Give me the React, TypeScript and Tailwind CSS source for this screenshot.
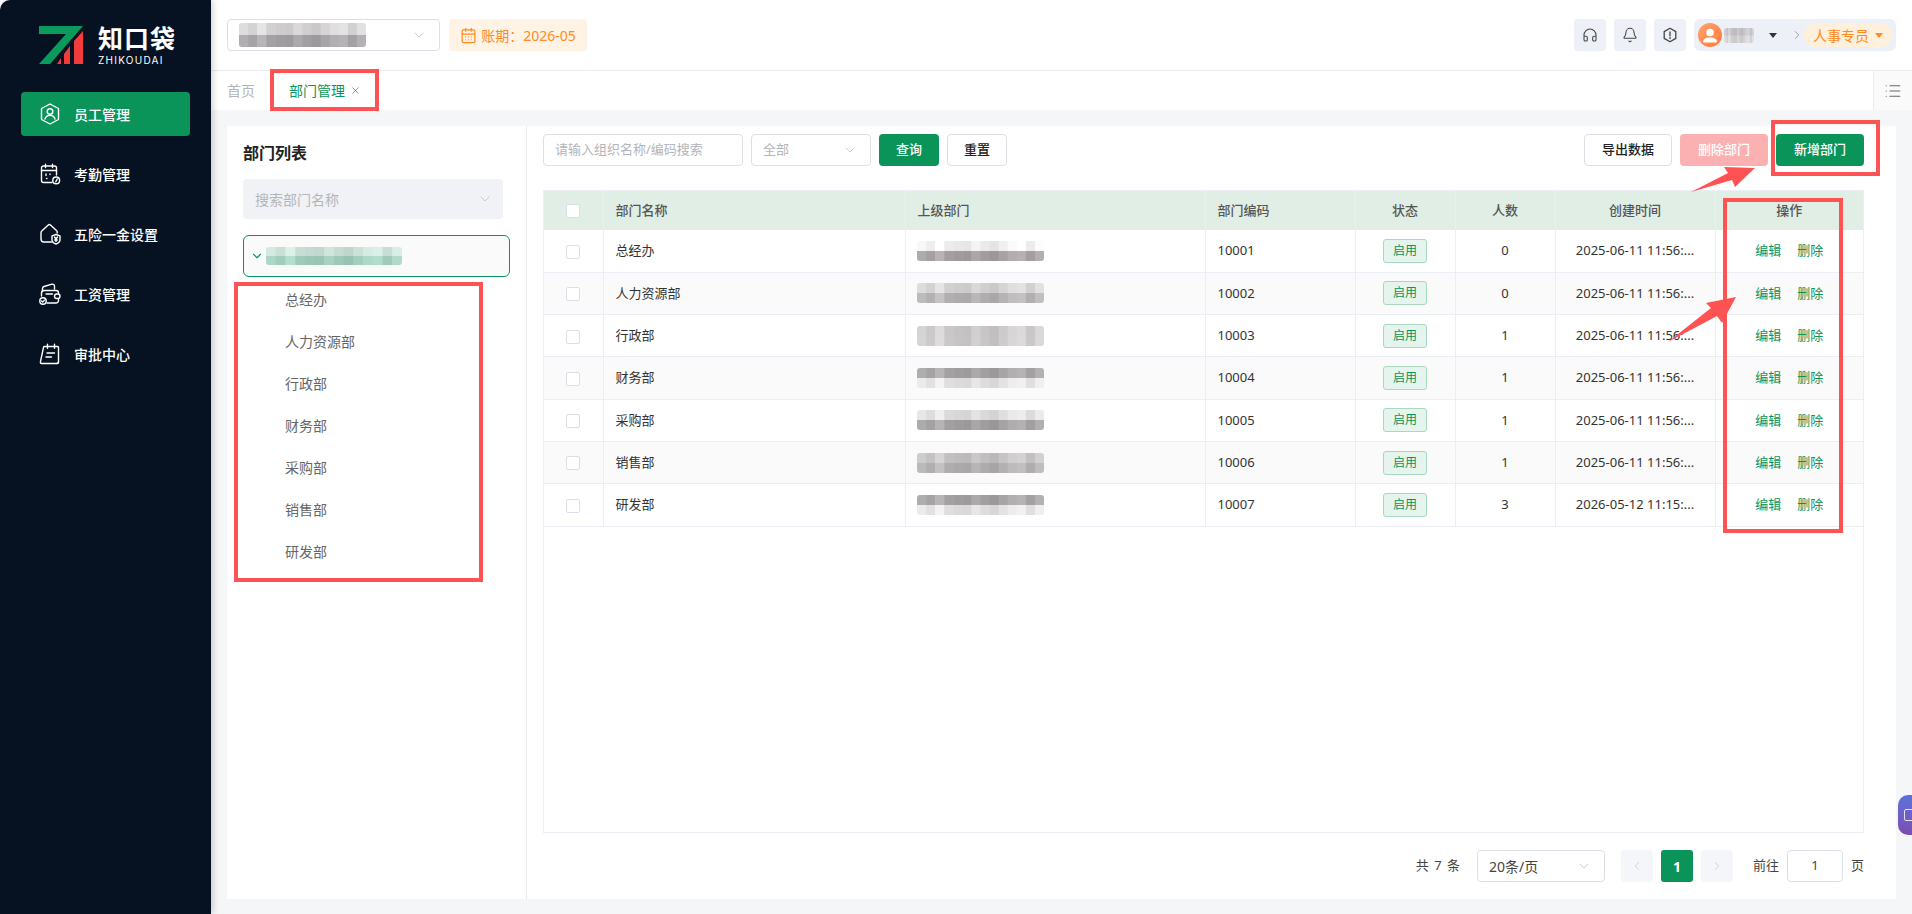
import { ChevronDown, ChevronLeft, ChevronRight, X, Headphones, Bell, List, CalendarDays } from "lucide-react";

const menuItems = [
  { label: "员工管理", icon: "staff", active: true },
  { label: "考勤管理", icon: "attendance" },
  { label: "五险一金设置", icon: "insurance" },
  { label: "工资管理", icon: "salary" },
  { label: "审批中心", icon: "approval" },
];

const rows = [
  { name: "总经办", code: "10001", count: 0, time: "2025-06-11 11:56:...", blur: ["f3f2f2", "aaa5a5"] },
  { name: "人力资源部", code: "10002", count: 0, time: "2025-06-11 11:56:...", blur: ["d8d7d8", "b8b5b6"] },
  { name: "行政部", code: "10003", count: 1, time: "2025-06-11 11:56:...", blur: ["cfcdce", "d0cecf"] },
  { name: "财务部", code: "10004", count: 1, time: "2025-06-11 11:56:...", blur: ["aaa7a8", "e6e5e6"] },
  { name: "采购部", code: "10005", count: 1, time: "2025-06-11 11:56:...", blur: ["e2e1e1", "a8a5a6"] },
  { name: "销售部", code: "10006", count: 1, time: "2025-06-11 11:56:...", blur: ["c8c6c7", "b5b3b4"] },
  { name: "研发部", code: "10007", count: 3, time: "2026-05-12 11:15:...", blur: ["aaa7a8", "e6e5e6"] },
];

const treeItems = ["总经办", "人力资源部", "行政部", "财务部", "采购部", "销售部", "研发部"];

// lightness wobble so the blurred names look like a mosaic
const wobble = [6, -4, 14, -6, -10, -12, 2, -8, -14, -2, 8, 12, -6, 10];

function shade(hex: string, delta: number) {
  const channel = (i: number) => {
    const v = parseInt(hex.slice(i, i + 2), 16) + delta;
    return Math.max(0, Math.min(255, v));
  };
  return `rgb(${channel(0)},${channel(2)},${channel(4)})`;
}

function Mosaic({ colors, width, height }: { colors: string[]; width: number; height: number }) {
  const cols = wobble.length;
  const cw = width / cols;
  const ch = height / colors.length;
  return (
    <svg width={width} height={height} className="block rounded-[3px]">
      {colors.map((c, r) =>
        wobble.map((d, i) => (
          <rect key={`${r}-${i}`} x={i * cw} y={r * ch} width={cw + 0.5} height={ch + 0.5} fill={shade(c, d)} />
        ))
      )}
    </svg>
  );
}

function MenuIcon({ name }: { name: string }) {
  const common = {
    width: 24,
    height: 24,
    viewBox: "0 0 24 24",
    fill: "none",
    stroke: "currentColor",
    strokeWidth: 1.4,
    strokeLinecap: "round" as const,
    strokeLinejoin: "round" as const,
  };
  if (name === "staff")
    return (
      <svg {...common}>
        <path d="M12 2 20.5 6.5V17.5L12 22 3.5 17.5V6.5Z" />
        <circle cx="12" cy="9.5" r="2.8" />
        <path d="M7 17c.8-2.6 2.8-3.6 5-3.6s4.2 1 5 3.6" />
      </svg>
    );
  if (name === "attendance")
    return (
      <svg {...common}>
        <path d="M14 20.5H5.5a2 2 0 0 1-2-2V6a2 2 0 0 1 2-2h11a2 2 0 0 1 2 2v7" />
        <path d="M3.5 8.5h15M7.5 2.2v3.4M14.5 2.2v3.4M8 12v1.5M12 12v.6M8.5 16.5h.5" />
        <circle cx="18.2" cy="18.4" r="3.4" />
        <path d="m19.2 17-1.4 2.8" />
      </svg>
    );
  if (name === "insurance")
    return (
      <svg {...common}>
        <path d="M13.5 20H6a3 3 0 0 1-3-3V10.5a2 2 0 0 1 .7-1.5L10 3.2a2 2 0 0 1 2.7 0L18.500 8.500a2 2 0 0 1 .7 1.500v1" />
        <path d="M18 12.500l4 1.300v4c0 2.200-1.800 3.500-4 4.200-2.200-.7-4-2-4-4.200v-4Z" />
        <path d="m16.500 15 1.500 2 1.500-2M18 17v2.500M16.700 18h2.600" />
      </svg>
    );
  if (name === "salary")
    return (
      <svg {...common}>
        <path d="M4.500 9.500V6.500c0-.9.6-1.700 1.500-2l8-2.300c1.200-.3 2.500.6 2.500 1.900V7" />
        <path d="M3.500 14V11a2.500 2.500 0 0 1 2.500-2.500h12a2.500 2.500 0 0 1 2.500 2.500v1" />
        <path d="M20.500 17v1.500a2.500 2.500 0 0 1-2.500 2.500H9" />
        <path d="M8 12h6.500" />
        <rect x="16.500" y="12" width="5.500" height="4.500" rx="2.200" />
        <circle cx="5" cy="19" r="3.200" />
        <path d="m3.600 19 1.100 1.100 1.800-2" />
      </svg>
    );
  return (
    <svg {...common}>
      <path d="M6.500 4.500h13a1 1 0 0 1 1 1V20a1.500 1.500 0 0 1-1.500 1.500H3.500a1.200 1.200 0 0 1-1.100-1.500L5.500 5.300a1 1 0 0 1 1-.8Z" />
      <path d="M9.500 2.200v4M16.500 2.200v4M9 11h7.500M8 15h5.500M20.500 20c0 1-.8 1.500-1.500 1.500" />
    </svg>
  );
}

function Logo() {
  return (
    <div className="flex items-start gap-[15px]">
      <svg width="44" height="38" viewBox="0 0 44 38" className="mt-px shrink-0">
        <path d="M0 0H44L11 38H0L27 8H0Z" fill="#0a9a5c" />
        <path d="M18 38 22 32V38Z M25 38V28L31 20V38Z M35 38V15L44 5V38Z" fill="#f23c3c" />
      </svg>
      <div className="flex flex-col text-white">
        <span className="text-[25px] leading-[26px] font-bold tracking-[1px]">知口袋</span>
        <span className="mt-[3px] font-['Inter',sans-serif] text-[10px] leading-[12px] tracking-[1.25px]">ZHIKOUDAI</span>
      </div>
    </div>
  );
}

function Sidebar() {
  return (
    <aside className="relative z-10 flex h-full w-[211px] shrink-0 flex-col rounded-tl-[10px] bg-[#061221] shadow-[2px_0_6px_rgba(0,0,0,0.18)]">
      <div className="flex h-[92px] pt-[25px] pl-[39px]">
        <Logo />
      </div>
      <nav className="flex flex-col px-[21px]">
        {menuItems.map((item) => (
          <div
            key={item.label}
            className={
              item.active
                ? "mb-4 flex h-[44px] items-center gap-[12px] rounded-[4px] bg-[#0a945a] pl-[17px] text-white"
                : "mb-4 flex h-[44px] items-center gap-[12px] pl-[17px] text-white"
            }
          >
            <MenuIcon name={item.icon} />
            <span className="text-[14px] font-medium">{item.label}</span>
          </div>
        ))}
      </nav>
    </aside>
  );
}

function TopBar() {
  return (
    <header className="flex h-[71px] shrink-0 items-center border-b border-[#e9ebef] bg-white pr-[16px] pl-[16px]">
      <div className="flex h-[32px] w-[213px] items-center justify-between rounded-[4px] border border-[#dcdfe6] pr-[12px] pl-[11px]">
        <Mosaic colors={["d8d6d7", "a9a7a9"]} width={127} height={24} />
        <ChevronDown size={16} strokeWidth={1} className="text-[#b5b8bf]" />
      </div>
      <div className="ml-[9px] flex h-[32px] w-[138px] items-center justify-center gap-[4px] rounded-[4px] bg-[#fff3e6] text-[14px] text-[#ff8a1f]">
        <CalendarDays size={17} strokeWidth={1.7} />
        <span>账期：2026-05</span>
      </div>
      <div className="ml-auto flex items-center gap-[8px]">
        <div className="flex h-[32px] w-[32px] items-center justify-center rounded-[4px] bg-[#edf0f7] text-[#444]">
          <Headphones size={16} strokeWidth={1.6} />
        </div>
        <div className="flex h-[32px] w-[32px] items-center justify-center rounded-[4px] bg-[#edf0f7] text-[#444]">
          <Bell size={16} strokeWidth={1.6} />
        </div>
        <div className="flex h-[32px] w-[32px] items-center justify-center rounded-[4px] bg-[#edf0f7] text-[#444]">
          <svg width="16" height="16" viewBox="0 0 16 16" fill="none" stroke="currentColor" strokeWidth="1.3">
            <path d="M8 1.300 13.800 4.600V11.400L8 14.700 2.200 11.400V4.600Z" strokeLinejoin="round" />
            <path d="M8 4.800v4M8 10.500v1" strokeLinecap="round" />
          </svg>
        </div>
        <div className="flex h-[32px] w-[202px] items-center rounded-[6px] bg-[#edf0f7] pr-[4px] pl-[4px]">
          <div className="flex h-[24px] w-[24px] items-center justify-center overflow-hidden rounded-full bg-gradient-to-br from-[#ffa36b] to-[#ff7a3d]">
            <svg width="24" height="24" viewBox="0 0 24 24" fill="#fff">
              <circle cx="12" cy="9.500" r="3.800" />
              <path d="M5 18.500c.5-3 3.500-4 7-4s6.500 1 7 4c0 .6-.4 1-1 1H6c-.6 0-1-.4-1-1Z" />
            </svg>
          </div>
          <div className="ml-[2px]">
            <Mosaic colors={["c8c7cb", "d6d5d8"]} width={30} height={15} />
          </div>
          <div className="ml-[15px] h-0 w-0 border-x-[4px] border-t-[5px] border-x-transparent border-t-[#333]" />
          <ChevronRight size={14} strokeWidth={1} className="ml-[13px] text-[#666]" />
          <div className="ml-auto flex h-[24px] w-[88px] items-center justify-center gap-[6px] rounded-full bg-[#fff0dc] text-[14px] text-[#ff8a1f]">
            <span>人事专员</span>
            <div className="h-0 w-0 border-x-[4px] border-t-[5px] border-x-transparent border-t-[#ff8a1f]" />
          </div>
        </div>
      </div>
    </header>
  );
}

function TabBar() {
  return (
    <div className="flex h-[39px] shrink-0 items-center bg-white pl-[16px] text-[14px]">
      <span className="text-[#b3b5ba]">首页</span>
      <div className="ml-[34px] flex items-center gap-[5px] text-[#0a945a]">
        <span>部门管理</span>
        <X size={11} strokeWidth={1.5} />
      </div>
      <div className="ml-auto flex h-full w-[39px] items-center justify-center border-l border-[#e9ebef] bg-[#fafafa] text-[#666]">
        <List size={18} strokeWidth={1.6} />
      </div>
    </div>
  );
}

function DeptPanel() {
  return (
    <div className="flex w-[300px] shrink-0 flex-col border-r border-[#e9ebef] pt-[16px] pl-[16px]">
      <div className="text-[16px] leading-[22px] font-bold text-[#222]">部门列表</div>
      <div className="mt-[15px] flex h-[40px] w-[260px] items-center justify-between rounded-[4px] bg-[#f0f2f5] pr-[10px] pl-[12px] text-[14px] text-[#b3b5ba]">
        <span>搜索部门名称</span>
        <ChevronDown size={16} strokeWidth={1} />
      </div>
      <div className="mt-[16px] flex h-[42px] w-[267px] items-center rounded-[6px] border border-[#0a945a] bg-[#fafafa] pl-[6px]">
        <ChevronDown size={14} strokeWidth={2} className="text-[#0a945a]" />
        <div className="ml-[2px]">
          <Mosaic colors={["cfe3db", "a6d1c1"]} width={136} height={18} />
        </div>
      </div>
      <ul className="mt-[1px] flex flex-col pl-[42px] text-[14px] text-[#666]">
        {treeItems.map((t) => (
          <li key={t} className="flex h-[42px] items-center">
            {t}
          </li>
        ))}
      </ul>
    </div>
  );
}

function Checkbox() {
  return <span className="inline-block h-[14px] w-[14px] rounded-[2px] border border-[#dcdfe6] bg-white align-middle" />;
}

function DeptTable() {
  const cell = "border-r border-b border-[#ebeef5]";
  return (
    <div className="mt-[24px] min-h-0 flex-1 border border-[#ebeef5]">
      <table className="w-full table-fixed border-collapse text-[13px] text-[#333]">
        <colgroup>
          <col className="w-[59px]" />
          <col className="w-[302px]" />
          <col className="w-[300px]" />
          <col className="w-[150px]" />
          <col className="w-[100px]" />
          <col className="w-[100px]" />
          <col className="w-[160px]" />
          <col />
        </colgroup>
        <thead>
          <tr className="h-[39px] bg-[#e0eee5] text-[#555]">
            <th className={`${cell} border-b-0 border-[#d5e3da] text-center font-normal`}>
              <Checkbox />
            </th>
            <th className={`${cell} border-b-0 border-[#d5e3da] pl-[12px] text-left font-medium`}>部门名称</th>
            <th className={`${cell} border-b-0 border-[#d5e3da] pl-[12px] text-left font-medium`}>上级部门</th>
            <th className={`${cell} border-b-0 border-[#d5e3da] pl-[12px] text-left font-medium`}>部门编码</th>
            <th className={`${cell} border-b-0 border-[#d5e3da] text-center font-medium`}>状态</th>
            <th className={`${cell} border-b-0 border-[#d5e3da] text-center font-medium`}>人数</th>
            <th className={`${cell} border-b-0 border-[#d5e3da] text-center font-medium`}>创建时间</th>
            <th className="text-center font-medium">操作</th>
          </tr>
        </thead>
        <tbody>
          {rows.map((row, i) => (
            <tr key={row.code} className={i % 2 === 1 ? "h-[42.3px] bg-[#fafafa]" : "h-[42.3px] bg-white"}>
              <td className={`${cell} text-center`}>
                <Checkbox />
              </td>
              <td className={`${cell} pl-[12px]`}>{row.name}</td>
              <td className={`${cell} pl-[11px]`}>
                <Mosaic colors={row.blur} width={127} height={20} />
              </td>
              <td className={`${cell} pl-[12px]`}>{row.code}</td>
              <td className={`${cell} text-center`}>
                <span className="inline-flex h-[24px] w-[44px] items-center justify-center rounded-[3px] border border-[#a9d8c2] bg-[#e6f4ee] text-[12px] text-[#0a945a]">
                  启用
                </span>
              </td>
              <td className={`${cell} text-center`}>{row.count}</td>
              <td className={`${cell} text-center`}>{row.time}</td>
              <td className="border-b border-[#ebeef5] text-center text-[#0a945a]">
                <span>编辑</span>
                <span className="ml-[16px]">删除</span>
              </td>
            </tr>
          ))}
        </tbody>
      </table>
    </div>
  );
}

function Pagination() {
  return (
    <div className="flex h-[66px] shrink-0 items-center justify-end text-[13px] text-[#444]">
      <span className="tracking-[1px]">共 7 条</span>
      <div className="ml-[16px] flex h-[32px] w-[128px] items-center justify-between rounded-[4px] border border-[#dcdfe6] pr-[12px] pl-[11px] text-[14px]">
        <span>20条/页</span>
        <ChevronDown size={16} strokeWidth={1} className="text-[#b5b8bf]" />
      </div>
      <div className="ml-[16px] flex h-[32px] w-[32px] items-center justify-center rounded-[3px] bg-[#f5f6f9] text-[#b5b8bf]">
        <ChevronLeft size={14} strokeWidth={1} />
      </div>
      <div className="ml-[8px] flex h-[32px] w-[32px] items-center justify-center rounded-[3px] bg-[#0a945a] text-[14px] font-bold text-white">
        1
      </div>
      <div className="ml-[8px] flex h-[32px] w-[32px] items-center justify-center rounded-[3px] bg-[#f5f6f9] text-[#b5b8bf]">
        <ChevronRight size={14} strokeWidth={1} />
      </div>
      <span className="ml-[20px]">前往</span>
      <div className="ml-[8px] flex h-[32px] w-[56px] items-center justify-center rounded-[4px] border border-[#dcdfe6]">1</div>
      <span className="ml-[8px]">页</span>
    </div>
  );
}

function Toolbar() {
  const plain = "flex h-[32px] items-center justify-center rounded-[4px] border border-[#dcdfe6] bg-white text-[13px] font-medium text-[#222]";
  const green = "flex h-[32px] items-center justify-center rounded-[4px] bg-[#0a945a] text-[13px] font-medium text-white";
  return (
    <div className="flex h-[32px] shrink-0 items-center">
      <div className="flex h-[32px] w-[200px] items-center rounded-[4px] border border-[#dcdfe6] pl-[11px] text-[13px] text-[#b3b5ba]">
        请输入组织名称/编码搜索
      </div>
      <div className="ml-[8px] flex h-[32px] w-[120px] items-center justify-between rounded-[4px] border border-[#dcdfe6] pr-[12px] pl-[11px] text-[13px] text-[#b3b5ba]">
        <span>全部</span>
        <ChevronDown size={16} strokeWidth={1} />
      </div>
      <div className={`${green} ml-[8px] w-[60px]`}>查询</div>
      <div className={`${plain} ml-[8px] w-[60px]`}>重置</div>
      <div className={`${plain} ml-auto w-[88px]`}>导出数据</div>
      <div className="ml-[8px] flex h-[32px] w-[88px] items-center justify-center rounded-[4px] bg-[#fbb1b1] text-[13px] font-medium text-white">
        删除部门
      </div>
      <div className={`${green} ml-[8px] w-[88px]`}>新增部门</div>
    </div>
  );
}

// red annotation marks drawn over the page
function Annotations() {
  const box = "pointer-events-none absolute border-[4px] border-[#ff5252]";
  return (
    <>
      <div className={`${box} top-[83px] left-[13px] h-[61px] w-[184px]`} />
      <div className={`${box} top-[69px] left-[270px] h-[42px] w-[109px]`} />
      <div className={`${box} top-[282px] left-[234px] h-[300px] w-[249px]`} />
      <div className={`${box} top-[120px] left-[1771px] h-[56px] w-[109px]`} />
      <div className={`${box} top-[198px] left-[1723px] h-[335px] w-[120px]`} />
      <svg className="pointer-events-none absolute top-0 left-0" width="1912" height="914">
        <path d="M1691 192 1728 173 1724 167 1755 168 1735 187 1732 180Z" fill="#ff5252" />
        <path d="M1668 342 1711 308 1706 303 1736 297 1722 323 1717 316Z" fill="#ff5252" />
      </svg>
      <div className="absolute top-[795px] right-0 flex h-[40px] w-[14px] items-center overflow-hidden rounded-l-[10px] bg-gradient-to-b from-[#5a72dc] to-[#7a4db0] pl-[6px] text-white">
        <span className="h-[12px] w-[12px] shrink-0 rounded-[2px] border border-white/80" />
      </div>
    </>
  );
}

export default function App() {
  return (
    <div className="relative flex h-[914px] w-[1912px] overflow-hidden bg-white font-['Noto_Sans','Noto_Sans_CJK_SC',sans-serif]">
      <Sidebar />
      <main className="flex min-w-0 flex-1 flex-col">
        <TopBar />
        <TabBar />
        <div className="flex min-h-0 flex-1 bg-[#f5f6f8] px-[16px] pt-[16px] pb-[15px]">
          <div className="flex min-w-0 flex-1 bg-white">
            <DeptPanel />
            <div className="flex min-w-0 flex-1 flex-col pt-[8px] pr-[32px] pl-[16px]">
              <Toolbar />
              <DeptTable />
              <Pagination />
            </div>
          </div>
        </div>
      </main>
      <Annotations />
    </div>
  );
}
